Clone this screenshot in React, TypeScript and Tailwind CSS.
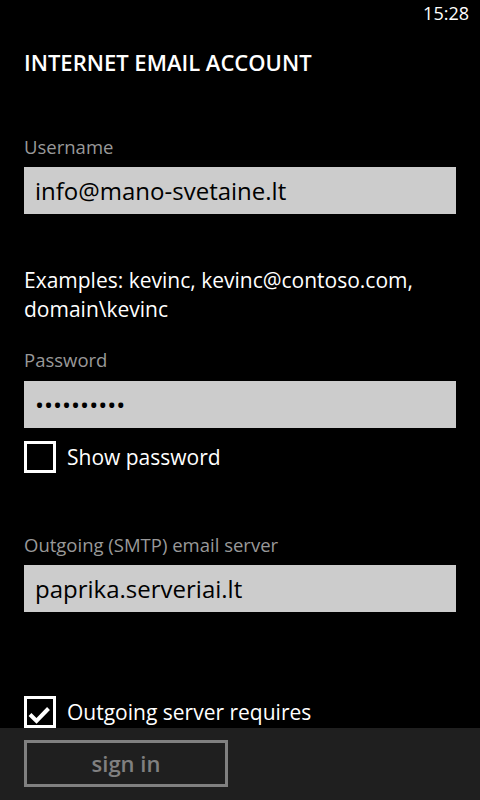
import { useState } from 'react';

const font = { fontFamily: '"Open Sans", "Noto Sans", sans-serif' };

function Label({ text, className }: { text: string; className: string }) {
  return <p className={'text-[18.5px] leading-[24px] text-[#999999] ' + className}>{text}</p>;
}

function Field({ value, className }: { value: string; className: string }) {
  return (
    <div className={'flex h-[47px] items-center bg-[#cccccc] pl-[11px] leading-[30px] text-black ' + className}>
      {value}
    </div>
  );
}

function CheckBox({ checked, label, className }: { checked: boolean; label: string; className: string }) {
  return (
    <div className={'flex items-center gap-[11px] ' + className}>
      <div className="h-8 w-8 shrink-0 border-[3px] border-white">
        {checked && (
          <svg width="26" height="26" viewBox="0 0 26 26">
            <polyline points="3,15.5 9.5,22 21.5,9.5" fill="none" stroke="white" strokeWidth="4" />
          </svg>
        )}
      </div>
      <span className="text-[21px] leading-[30px] text-white">{label}</span>
    </div>
  );
}

export default function App() {
  const [showPassword] = useState(false);

  return (
    <div className="flex h-[800px] w-[480px] flex-col overflow-hidden bg-black" style={font}>
      <div className="flex h-8 shrink-0 justify-end pr-[11px] pt-px">
        <span className="text-[18px] leading-[24px] text-white">15:28</span>
      </div>

      <div className="flex-1 overflow-hidden px-6">
        <h1 className="mt-4 text-[22px] font-semibold leading-[28px] text-white">INTERNET EMAIL ACCOUNT</h1>

        <Label text="Username" className="mt-[59px]" />
        <Field value="info@mano-svetaine.lt" className="mt-2 text-[24px]" />

        <p className="mt-[52px] text-[21px] leading-[29px] text-white">
          Examples: kevinc, kevinc@contoso.com, domain\kevinc
        </p>

        <Label text="Password" className="mt-6" />
        <Field value="••••••••••" className="mt-[9px] text-[24px]" />
        <CheckBox checked={showPassword} label="Show password" className="mt-[13px]" />

        <Label text="Outgoing (SMTP) email server" className="mt-[60px]" />
        <Field value="paprika.serveriai.lt" className="mt-2 text-[24px]" />

        <CheckBox checked label="Outgoing server requires" className="mt-[84px]" />
      </div>

      <div className="h-[72px] shrink-0 bg-[#1f1f1f] px-6 pt-3">
        <button className="flex h-[47px] w-[204px] items-center justify-center border-[3px] border-[#808080] text-[22px] font-semibold text-[#808080]">
          sign in
        </button>
      </div>
    </div>
  );
}
